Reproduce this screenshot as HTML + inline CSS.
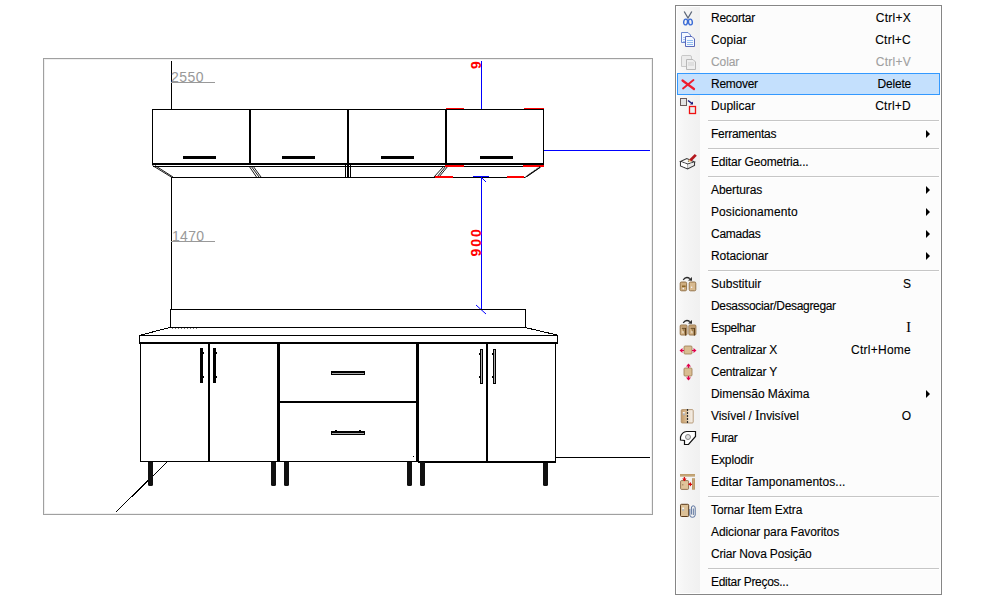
<!DOCTYPE html>
<html><head><meta charset="utf-8">
<style>
html,body{margin:0;padding:0;background:#fff;width:991px;height:597px;overflow:hidden;position:relative;font-family:"Liberation Sans",sans-serif;}
#draw{position:absolute;left:0;top:0;}
#menu{position:absolute;left:675px;top:5px;width:265px;height:588px;border:1px solid #868686;background:#fcfcfc;box-shadow:inset 0 0 0 1px #fff;}
#icol{position:absolute;left:1px;top:1px;width:23px;height:586px;background:linear-gradient(to right,#fafafa 0px,#f5f5f5 8px,#f0f0f0 23px);}
.it{position:absolute;left:0;width:265px;height:22px;font-size:12px;color:#000;-webkit-text-stroke:0.12px #000;}
.it .t{position:absolute;left:35px;top:4px;white-space:nowrap;}
.it .k{position:absolute;right:30px;top:4px;white-space:nowrap;}
.it .a{position:absolute;left:250px;top:7px;width:0;height:0;border-top:4px solid transparent;border-bottom:4px solid transparent;border-left:4px solid #000;}
.it.dis{color:#a0a0a0;-webkit-text-stroke:0.12px #a0a0a0;}
.it.hl{left:1px;width:261px;height:20px;border:1px solid #3399ff;background:#c4e0fd;}
.it.hl .t{left:33px;top:3px;}
.it.hl .k{right:28px;top:3px;}
.it.hl .ic{left:-2px;top:-1px;}
.sep{position:absolute;left:32px;width:231px;height:1px;background:#c6c6c6;border-bottom:1px solid #fff;}
.ic{position:absolute;left:0;top:0;}
.si{font-family:"Liberation Serif",serif;font-size:14px;line-height:0;}
</style></head><body>
<svg id="draw" width="991" height="597" shape-rendering="crispEdges">
  <!-- frame -->
  <rect x="43.5" y="58.5" width="609" height="456" fill="none" stroke="#a0a0a0"/>
  <rect x="44.5" y="59.5" width="607" height="454" fill="none" stroke="#f0f0f0"/>
  <g stroke="#000" fill="none">
    <!-- wall line -->
    <line x1="171.5" y1="61" x2="171.5" y2="109"/>
    <line x1="171.5" y1="177" x2="171.5" y2="310"/>
    <!-- upper cabinets -->
    <line x1="152" y1="109.5" x2="544" y2="109.5"/>
    <line x1="152.5" y1="109" x2="152.5" y2="165"/>
    <line x1="543.5" y1="109" x2="543.5" y2="165"/>
    <line x1="152" y1="164" x2="544" y2="164" stroke-width="2"/>
    <line x1="250" y1="110" x2="250" y2="163" stroke-width="2"/>
    <line x1="348" y1="110" x2="348" y2="163" stroke-width="2"/>
    <line x1="446" y1="110" x2="446" y2="163" stroke-width="2"/>
    <line x1="153" y1="166.5" x2="543" y2="166.5"/>
    <line x1="172" y1="177.5" x2="525" y2="177.5"/>
    <line x1="345.5" y1="165" x2="345.5" y2="177"/>
    <line x1="347.5" y1="165" x2="347.5" y2="177"/>
    <line x1="348.5" y1="165" x2="348.5" y2="177"/>
    <line x1="350.5" y1="165" x2="350.5" y2="177"/>
  </g>
  <g stroke="#000" fill="none" shape-rendering="auto" stroke-width="0.9">
    <line x1="152.5" y1="165.5" x2="172" y2="177.5"/>
    <line x1="155" y1="165.5" x2="173" y2="177"/>
    <line x1="249" y1="166" x2="256.5" y2="177"/>
    <line x1="251" y1="166" x2="259" y2="177"/>
    <line x1="253" y1="166" x2="261" y2="177"/>
    <line x1="444" y1="166" x2="434" y2="177"/>
    <line x1="446" y1="166" x2="437" y2="177"/>
    <line x1="448" y1="166" x2="439" y2="177"/>
    <line x1="542" y1="166" x2="525" y2="177.5"/>
    <line x1="540" y1="167.5" x2="527" y2="176.5"/>
  </g>
  <!-- upper handles -->
  <g fill="#000">
    <rect x="183" y="156" width="33" height="3"/>
    <rect x="282" y="156" width="33" height="3"/>
    <rect x="381" y="156" width="33" height="3"/>
    <rect x="480" y="156" width="33" height="3"/>
  </g>
  <!-- red marks -->
  <g fill="#f00">
    <rect x="446" y="108" width="18" height="1"/>
    <rect x="524" y="108" width="20" height="1"/>
    <rect x="445" y="165" width="19" height="2"/>
    <rect x="523" y="165" width="21" height="2"/>
    <rect x="435" y="176" width="18" height="2"/>
    <rect x="507" y="176" width="17" height="2"/>
  </g>
  <!-- blue dimension -->
  <g stroke="#0000ff" fill="none">
    <line x1="481.5" y1="61" x2="481.5" y2="109"/>
    <line x1="544" y1="150.5" x2="650" y2="150.5"/>
    <line x1="481.5" y1="177" x2="481.5" y2="310"/>
    <line x1="473" y1="176.5" x2="489" y2="176.5"/>
    <line x1="474" y1="309.5" x2="490" y2="309.5"/>
  </g>
  <g stroke="#0000ff" fill="none" shape-rendering="auto">
    <line x1="482" y1="178" x2="486" y2="182"/>
    <line x1="476" y1="305" x2="486" y2="314"/>
  </g>
  <!-- dimension texts -->
  <text x="0" y="0" transform="translate(481,256.5) rotate(-90)" font-family="Liberation Sans" font-weight="bold" font-size="14" fill="#f00" letter-spacing="2">900</text>
  <svg x="466" y="61" width="15" height="10" overflow="hidden"><text x="0" y="0" transform="translate(15,8) rotate(-90)" font-family="Liberation Sans" font-weight="bold" font-size="14" fill="#f00">9</text></svg>
  <g fill="#999" font-family="Liberation Sans" font-size="14">
    <text x="171" y="82" letter-spacing="0.5">2550</text>
    <text x="172" y="241" letter-spacing="0.3">1470</text>
  </g>
  <g stroke="#999">
    <line x1="171" y1="82.5" x2="215" y2="82.5"/>
    <line x1="171" y1="241.5" x2="215" y2="241.5"/>
  </g>
  <!-- backsplash & countertop -->
  <g stroke="#000" fill="none">
    <line x1="171" y1="309.5" x2="526" y2="309.5"/>
    <line x1="170.5" y1="309" x2="170.5" y2="328"/>
    <line x1="525.5" y1="309" x2="525.5" y2="328"/>
    <line x1="170" y1="327.5" x2="526" y2="327.5"/>
    <line x1="139" y1="335.5" x2="558" y2="335.5"/>
    <line x1="139.5" y1="335" x2="139.5" y2="343"/>
    <line x1="557.5" y1="335" x2="557.5" y2="343"/>
    <line x1="139" y1="343" x2="558" y2="343" stroke-width="2"/>
    <!-- lower cabinets -->
    <line x1="140.5" y1="343" x2="140.5" y2="462"/>
    <line x1="555.5" y1="343" x2="555.5" y2="462"/>
    <line x1="140" y1="461.5" x2="418" y2="461.5"/>
    <line x1="418" y1="462" x2="556" y2="462" stroke-width="2"/>
    <line x1="209" y1="344" x2="209" y2="461" stroke-width="2"/>
    <line x1="278.5" y1="344" x2="278.5" y2="461" stroke-width="3"/>
    <line x1="417.5" y1="344" x2="417.5" y2="461" stroke-width="3"/>
    <line x1="487" y1="344" x2="487" y2="461" stroke-width="2"/>
    <line x1="279" y1="402" x2="416" y2="402" stroke-width="2"/>
    <line x1="555" y1="457.5" x2="650" y2="457.5"/>
  </g>
  <g stroke="#000" fill="none">
    <line x1="170" y1="327.5" x2="139" y2="335.5"/>
    <line x1="525" y1="327.5" x2="557" y2="335"/>
    <line x1="167" y1="462" x2="116" y2="512"/>
  </g>
  <!-- lower handles -->
  <g fill="#000">
    <rect x="200" y="348" width="3" height="35"/>
    <rect x="203" y="352" width="1" height="2"/>
    <rect x="203" y="376" width="1" height="2"/>
    <rect x="213" y="348" width="3" height="35"/>
    <rect x="216" y="352" width="1" height="2"/>
    <rect x="216" y="376" width="1" height="2"/>
    <rect x="331" y="371" width="34" height="4"/>
    <rect x="331" y="431" width="34" height="4"/>
    <rect x="335" y="430" width="2" height="1"/>
    <rect x="359" y="430" width="2" height="1"/>
    <rect x="480" y="349" width="3" height="35"/>
    <rect x="479" y="353" width="1" height="2"/>
    <rect x="479" y="376" width="1" height="2"/>
    <rect x="493" y="349" width="3" height="35"/>
    <rect x="492" y="353" width="1" height="2"/>
    <rect x="492" y="376" width="1" height="2"/>
  </g>
  <g fill="#a8a8a8">
    <rect x="332" y="373" width="32" height="1"/>
    <rect x="332" y="433" width="32" height="1"/>
    <rect x="481" y="350" width="1" height="33"/>
    <rect x="494" y="350" width="1" height="33"/>
  </g>
  <!-- legs -->
  <g fill="#111" shape-rendering="auto">
    <path d="M148 462 h5 v22.5 q0 1.5 -1.5 1.5 h-2 q-1.5 0 -1.5 -1.5 Z"/>
    <path d="M271 462 h5 v22.5 q0 1.5 -1.5 1.5 h-2 q-1.5 0 -1.5 -1.5 Z"/>
    <path d="M284 462 h5 v22.5 q0 1.5 -1.5 1.5 h-2 q-1.5 0 -1.5 -1.5 Z"/>
    <path d="M407 462 h5 v22.5 q0 1.5 -1.5 1.5 h-2 q-1.5 0 -1.5 -1.5 Z"/>
    <path d="M420 462 h5 v22.5 q0 1.5 -1.5 1.5 h-2 q-1.5 0 -1.5 -1.5 Z"/>
    <path d="M543 463 h5 v21.5 q0 1.5 -1.5 1.5 h-2 q-1.5 0 -1.5 -1.5 Z"/>
  </g>
  <rect x="413" y="456" width="1" height="1" fill="#000"/>
  <line x1="172" y1="328.5" x2="198" y2="328.5" stroke="#777" stroke-dasharray="1 2"/>
  <line x1="540" y1="166.5" x2="526.5" y2="176" stroke="#000" stroke-width="0.8" shape-rendering="auto" stroke-dasharray="1.2 0.8"/>
</svg>

<div id="menu"><div id="icol"></div>
<svg width="0" height="0" style="position:absolute"><defs><linearGradient id="brg" x1="0" x2="1"><stop offset="0" stop-color="#e2c9a2"/><stop offset="1" stop-color="#c9a77a"/></linearGradient><linearGradient id="dg" x1="0" x2="1"><stop offset="0" stop-color="#c49a68"/><stop offset="0.5" stop-color="#dcc29c"/><stop offset="0.55" stop-color="#eadcc8"/><stop offset="1" stop-color="#f6f0ea"/></linearGradient></defs></svg>
<div class="it" style="top:1px"><svg class="ic" width="24" height="22"><path d="M8.2 4.5 L12 11 L15.8 4.5" fill="none" stroke="#5c6678" stroke-width="1.3"/>
   <ellipse cx="9.6" cy="15" rx="1.9" ry="2.9" transform="rotate(10 9.6 15)" fill="none" stroke="#3b6cd6" stroke-width="1.4"/>
   <ellipse cx="14.4" cy="15" rx="1.9" ry="2.9" transform="rotate(-10 14.4 15)" fill="none" stroke="#3b6cd6" stroke-width="1.4"/></svg><span class="t" style="letter-spacing:-0.257px">Recortar</span><span class="k" style="letter-spacing:0.25px">Ctrl+X</span></div>
<div class="it" style="top:23px"><svg class="ic" width="24" height="22"><path d="M5.5 3.5 H12 L14.5 6 V13.5 H5.5 Z" fill="#f4f8ff" stroke="#6a86d0"/>
   <path d="M7 8.5h5M7 10.5h5M7 12.5h5" stroke="#a8c8f4"/>
   <path d="M9.5 7.5 H16 L18.5 10 V17.5 H9.5 Z" fill="#f4f8ff" stroke="#5a68b8"/>
   <path d="M11 11.5h6M11 13.5h6M11 15.5h6" stroke="#90bcf0"/></svg><span class="t" style="letter-spacing:0.080px">Copiar</span><span class="k" style="letter-spacing:0.25px">Ctrl+C</span></div>
<div class="it dis" style="top:45px"><svg class="ic" width="24" height="22"><path d="M5.5 5.5 Q5.5 4.5 7 4.5 H14 Q15.5 4.5 15.5 6 V15.5 H5.5 Z" fill="#ececec" stroke="#c8c8c8"/>
   <path d="M10.5 8.5 H17 L19.5 11 V18.5 H10.5 Z" fill="#eeeeee" stroke="#b8b8b8"/>
   <path d="M12 12h6M12 14h6" stroke="#cfcfcf"/></svg><span class="t" style="letter-spacing:-0.100px">Colar</span><span class="k" style="letter-spacing:0.25px">Ctrl+V</span></div>
<div class="it hl" style="top:67px"><svg class="ic" width="24" height="22"><path d="M6.5 7.5 L18 16" stroke="#ee1c2e" stroke-width="2.2" stroke-linecap="round"/>
   <path d="M17.5 7 L7 15.5" stroke="#ee1c2e" stroke-width="1.8" stroke-linecap="round"/></svg><span class="t" style="letter-spacing:-0.267px">Remover</span><span class="k" style="letter-spacing:-0.2px">Delete</span></div>
<div class="it" style="top:89px"><svg class="ic" width="24" height="22"><rect x="4.5" y="3.5" width="6" height="7" fill="#e4e4e4" stroke="#6a5a5a"/>
   <path d="M12 5.5 L16 8.5" stroke="#1a1a7a" stroke-width="1.5"/><path d="M14 9.5 L17 9.5 L17 6.5 Z" fill="#1a1a7a"/>
   <rect x="13.5" y="11.5" width="6" height="7" fill="#e8eeee" stroke="#f01010" stroke-width="1.3"/></svg><span class="t" style="letter-spacing:0.029px">Duplicar</span><span class="k" style="letter-spacing:0.25px">Ctrl+D</span></div>
<div class="sep" style="top:114px"></div>
<div class="it" style="top:117px"><span class="t" style="letter-spacing:-0.260px">Ferramentas</span><span class="a"></span></div>
<div class="sep" style="top:142px"></div>
<div class="it" style="top:145px"><svg class="ic" width="24" height="22"><path d="M4.5 10.5 L10.8 7.5 L18.5 11 L11.6 13 Z" fill="#fafafa" stroke="#3a3a3a" stroke-width="1.1"/>
   <path d="M4.5 10.5 V15 L11.6 17.8 L18.5 14.3 V11 M11.6 13 V17.8" fill="none" stroke="#3a3a3a" stroke-width="1.1"/>
   <path d="M5 11 L11.6 13.5 V17.3 L5 14.6 Z" fill="#fff"/><path d="M12.1 13.5 L18 11.4 V14 L12.1 17 Z" fill="#e8e8e8"/>
   <path d="M13.2 8.5 L18.8 3 L20.8 4.8 L15.2 10.4 Z" fill="#b3161c"/>
   <path d="M11.8 10.8 L13 8.2 L15.5 10.6 Z" fill="#e6bc6a"/><path d="M11.8 10.8 L12.3 9.6 L13 10.3 Z" fill="#111"/></svg><span class="t" style="letter-spacing:-0.167px">Editar Geometria...</span></div>
<div class="sep" style="top:170px"></div>
<div class="it" style="top:173px"><span class="t" style="letter-spacing:-0.088px">Aberturas</span><span class="a"></span></div>
<div class="it" style="top:195px"><span class="t" style="letter-spacing:0.092px">Posicionamento</span><span class="a"></span></div>
<div class="it" style="top:217px"><span class="t" style="letter-spacing:-0.283px">Camadas</span><span class="a"></span></div>
<div class="it" style="top:239px"><span class="t" style="letter-spacing:-0.078px">Rotacionar</span><span class="a"></span></div>
<div class="sep" style="top:264px"></div>
<div class="it" style="top:267px"><svg class="ic" width="24" height="22"><rect x="4.2" y="9" width="6.4" height="8.8" rx="1.3" fill="#cfae80" stroke="#8c6a3e" stroke-width="0.9"/>
   <rect x="13.2" y="9" width="6.6" height="8.8" rx="1.3" fill="#d8ba90" stroke="#8c6a3e" stroke-width="0.9"/>
   <rect x="6" y="12.5" width="3.6" height="1.6" fill="#8a6428"/><circle cx="7.3" cy="15.6" r="0.8" fill="#f4f4ff"/><circle cx="15.6" cy="14.2" r="0.8" fill="#f4f4ff"/>
   <path d="M7.2 6.8 Q10 3 13.8 5.6" fill="none" stroke="#2a2a2a" stroke-width="1.3"/><path d="M12 7.6 L16 7.8 L15.9 4 Z" fill="#2a2a2a"/></svg><span class="t" style="letter-spacing:0.033px">Substituir</span><span class="k" style="letter-spacing:0px">S</span></div>
<div class="it" style="top:289px"><span class="t" style="letter-spacing:-0.333px">Desassociar/Desagregar</span></div>
<div class="it" style="top:311px"><svg class="ic" width="24" height="22"><rect x="4.2" y="8" width="6.8" height="10" rx="1" fill="#d6b68a" stroke="#8c6a3e" stroke-width="0.9"/>
   <rect x="12.9" y="8" width="7" height="10" rx="1" fill="#d6b68a" stroke="#8c6a3e" stroke-width="0.9"/>
   <path d="M5 9.2 H10.5 M13.6 9.2 H19.3" stroke="#b89466" stroke-width="1"/>
   <path d="M5.8 11.3 H9.6 V18.5 M14.6 11.3 H18.4 V18.5" fill="none" stroke="#5a3c18" stroke-width="1.1"/><path d="M6.5 12 L8.8 12 L8.8 18 Z M15.3 12 L17.6 12 L17.6 18 Z" fill="#a0804f"/>
   <circle cx="7" cy="15" r="0.7" fill="#fff"/><circle cx="16" cy="15" r="0.7" fill="#fff"/>
   <path d="M7.2 5.8 Q10 2 13.8 4.6" fill="none" stroke="#2a2a2a" stroke-width="1.3"/><path d="M12 6.6 L16 6.8 L15.9 3 Z" fill="#2a2a2a"/></svg><span class="t" style="letter-spacing:-0.386px">Espelhar</span><span class="k" style="letter-spacing:0px"><span class="si">I</span></span></div>
<div class="it" style="top:333px"><svg class="ic" width="24" height="22"><rect x="8" y="7" width="8" height="8" rx="1" fill="#d9bd92" stroke="#9a7a50" stroke-width="0.8"/>
   <path d="M4 11.5 H8 M16 11.5 H20" stroke="#e0004a" stroke-width="1.2"/>
   <path d="M3.5 11.5 L6.5 9 V14 Z M20.5 11.5 L17.5 9 V14 Z" fill="#e0004a"/></svg><span class="t" style="letter-spacing:-0.250px">Centralizar X</span><span class="k" style="letter-spacing:0.25px">Ctrl+Home</span></div>
<div class="it" style="top:355px"><svg class="ic" width="24" height="22"><rect x="8" y="7" width="8" height="8" rx="1" fill="#d9bd92" stroke="#9a7a50" stroke-width="0.8"/>
   <path d="M12.5 3 V7 M12.5 15 V19" stroke="#e0004a" stroke-width="1.2"/>
   <path d="M12.5 2.5 L10 5.5 H15 Z M12.5 19.5 L10 16.5 H15 Z" fill="#e0004a"/></svg><span class="t" style="letter-spacing:-0.250px">Centralizar Y</span></div>
<div class="it" style="top:377px"><span class="t" style="letter-spacing:-0.064px">Dimensão Máxima</span><span class="a"></span></div>
<div class="it" style="top:399px"><svg class="ic" width="24" height="22"><rect x="5.2" y="4.6" width="12" height="13.4" rx="1" fill="url(#dg)" stroke="#a88860" stroke-width="0.8"/>
   <rect x="6.8" y="7" width="2" height="1.6" fill="#f4f4f4"/><rect x="6.8" y="8.6" width="2" height="1.6" fill="#a8b4c4"/>
   <path d="M11.5 4 V18.6" stroke="#2a2a2a" stroke-width="1.2" stroke-dasharray="2 1"/></svg><span class="t" style="letter-spacing:-0.111px">Visível / <span class="si">I</span>nvisível</span><span class="k" style="letter-spacing:0px">O</span></div>
<div class="it" style="top:421px"><svg class="ic" width="24" height="22"><path d="M4.5 10 Q6 5 10.5 4.5 H19.5 V9.5 L12.5 17.5 H8.5 V13.5 L4.5 13 Z" fill="#fff" stroke="#111" stroke-width="1.2"/>
   <circle cx="12" cy="10" r="2.5" fill="#e0e0e0" stroke="#888"/></svg><span class="t" style="letter-spacing:-0.475px">Furar</span></div>
<div class="it" style="top:443px"><span class="t" style="letter-spacing:-0.100px">Explodir</span></div>
<div class="it" style="top:465px"><svg class="ic" width="24" height="22"><rect x="4" y="3" width="15" height="2.6" fill="#bc9c6c"/><path d="M4 4.3 H19" stroke="#d0b488" stroke-width="0.5"/>
   <rect x="16" y="7.2" width="3" height="11.5" fill="#bc9c6c"/><path d="M17.5 7.2 V18.7" stroke="#d0b488" stroke-width="0.5"/>
   <rect x="4.6" y="9.6" width="8" height="8.8" rx="1" fill="#e0c49a" stroke="#8a6a48" stroke-width="0.9"/>
   <path d="M6.8 13 V14.5" stroke="#8a6a48" stroke-width="0.8"/>
   <path d="M8.4 6 V10 M12.5 13.3 H16" stroke="#d80c0c" stroke-width="1.3"/>
   <path d="M6.2 7.4 L10.6 7.4 L8.4 10.2 Z M12.5 13.3 L15 11 L15 15.6 Z" fill="#d80c0c"/></svg><span class="t" style="letter-spacing:0.055px">Editar Tamponamentos...</span></div>
<div class="sep" style="top:490px"></div>
<div class="it" style="top:493px"><svg class="ic" width="24" height="22"><rect x="4.5" y="5.3" width="8.2" height="12.2" rx="1" fill="#dcc096" stroke="#5a3a1a" stroke-width="1"/>
   <rect x="6.2" y="8.5" width="1.9" height="1.8" fill="#f4f4f4"/><rect x="6.2" y="10.3" width="1.9" height="1.4" fill="#a8b8c8"/>
   <path d="M13.8 10 V16 Q13.8 18.3 16.4 18.3 Q19.2 18.3 19.2 16 V9 Q19.2 6.8 17.2 6.8 Q15.4 6.8 15.4 9 V15.5 M17.3 9.5 V16" fill="none" stroke="#4a6494" stroke-width="0.9"/></svg><span class="t" style="letter-spacing:-0.125px">Tornar <span class="si">I</span>tem Extra</span></div>
<div class="it" style="top:515px"><span class="t" style="letter-spacing:-0.083px">Adicionar para Favoritos</span></div>
<div class="it" style="top:537px"><span class="t" style="letter-spacing:-0.165px">Criar Nova Posição</span></div>
<div class="sep" style="top:562px"></div>
<div class="it" style="top:565px"><span class="t" style="letter-spacing:-0.287px">Editar Preços...</span></div>
</div>
</body></html>
